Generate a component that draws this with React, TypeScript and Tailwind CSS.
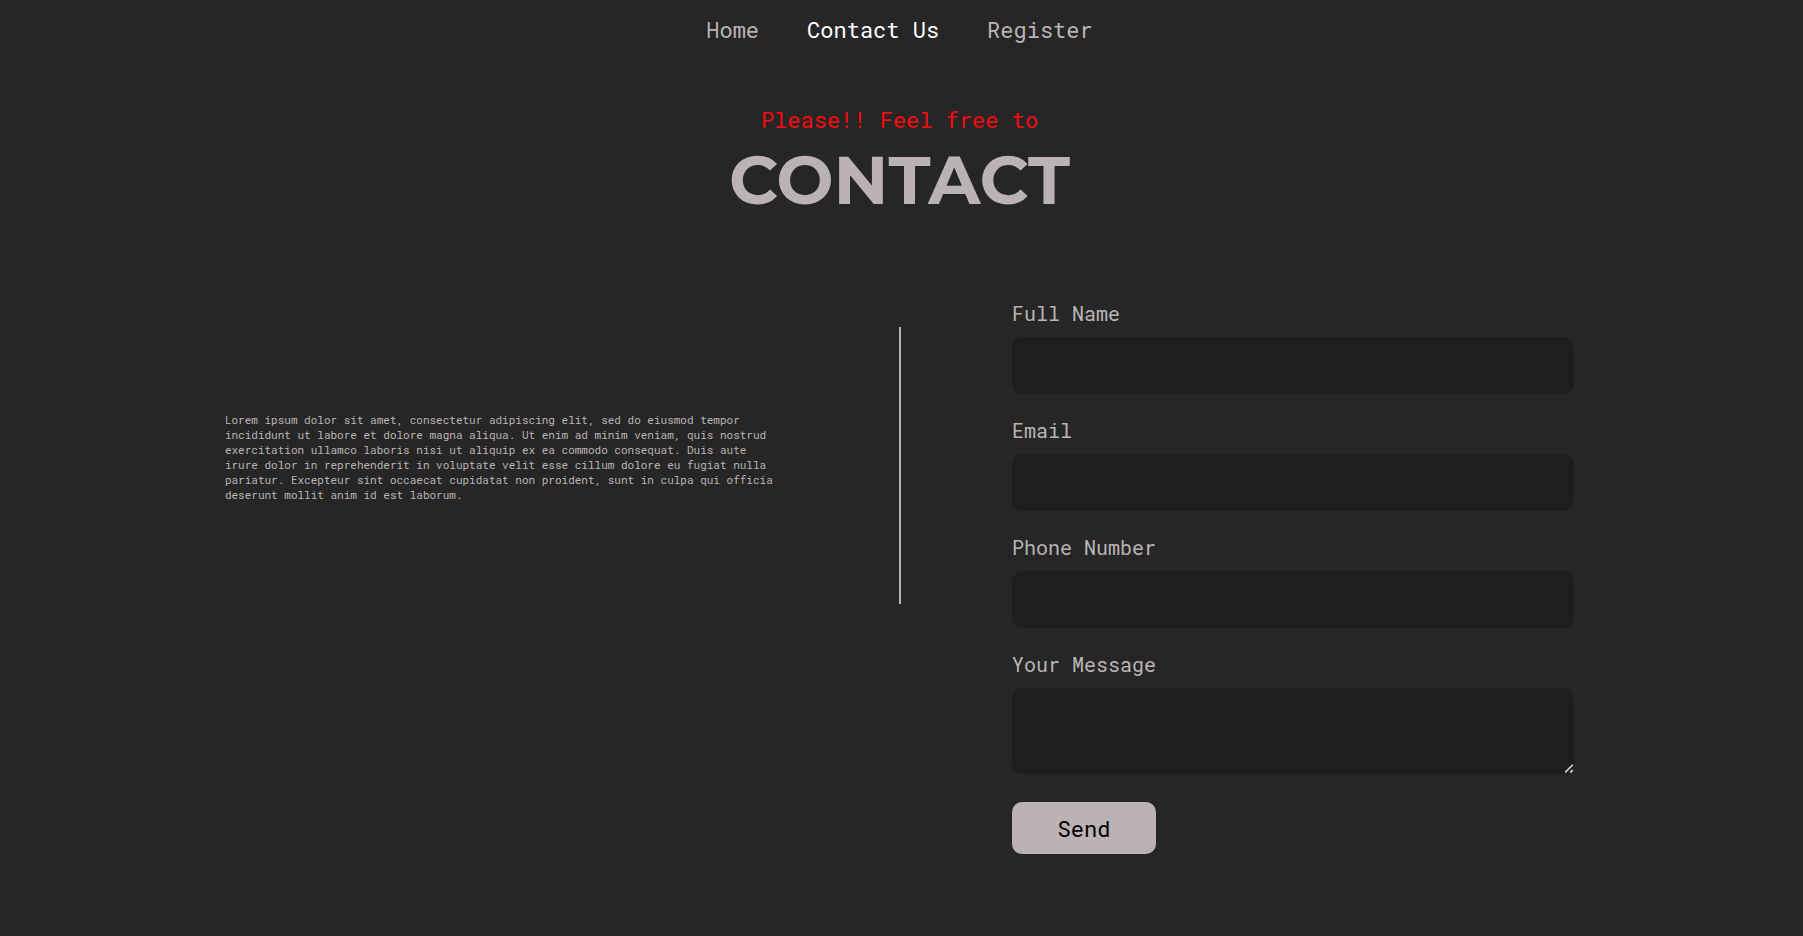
const links = [
  { label: 'Home', active: false },
  { label: 'Contact Us', active: true },
  { label: 'Register', active: false },
]

const fields = [
  { id: 'name', label: 'Full Name', type: 'text' },
  { id: 'email', label: 'Email', type: 'email' },
  { id: 'phone', label: 'Phone Number', type: 'tel' },
]

const labelClass = 'text-[20px] leading-[24px] text-[#bbb4b5]'
const boxClass = 'block w-full rounded-[10px] bg-[#1e1e1e] px-4 text-[20px] text-[#bbb4b5] outline-none'

export default function App() {
  return (
    <div className="min-h-screen bg-[#262626] pr-1 pb-16 font-['Roboto_Mono','Liberation_Mono',monospace] text-[#bbb4b5]">
      <nav className="flex justify-center gap-12 pt-[15px] text-[22px] leading-[30px]">
        {links.map((link) => (
          <a key={link.label} href="#" className={link.active ? 'text-white' : 'text-[#bbb4b5]'}>
            {link.label}
          </a>
        ))}
      </nav>

      <header className="pt-[60px] text-center">
        <p className="text-[22px] leading-[30px] text-[#f40b10]">Please!! Feel free to</p>
        <h1 className="font-['Montserrat','Lato',sans-serif] text-[68px] font-bold leading-[90px] text-[#bbb2b4]">
          CONTACT
        </h1>
      </header>

      <main className="mx-auto grid w-3/4 max-w-[1350px] grid-cols-[5fr_2fr_5fr] pt-[76px]">
        <p className="pr-2 pt-[111px] text-[11px] leading-[15px]">
          Lorem ipsum dolor sit amet, consectetur adipiscing elit, sed do eiusmod tempor incididunt ut labore et dolore
          magna aliqua. Ut enim ad minim veniam, quis nostrud exercitation ullamco laboris nisi ut aliquip ex ea commodo
          consequat. Duis aute irure dolor in reprehenderit in voluptate velit esse cillum dolore eu fugiat nulla
          pariatur. Excepteur sint occaecat cupidatat non proident, sunt in culpa qui officia deserunt mollit anim id
          est laborum.
        </p>
        <div className="mt-[26px] h-[277px] w-[2px] justify-self-center bg-[#bbb2b4]" />
        <form className="flex flex-col gap-6">
          {fields.map((field) => (
            <div key={field.id} className="flex flex-col gap-3">
              <label htmlFor={field.id} className={labelClass}>
                {field.label}
              </label>
              <input id={field.id} type={field.type} className={`${boxClass} h-[57px]`} />
            </div>
          ))}
          <div className="flex flex-col gap-3">
            <label htmlFor="message" className={labelClass}>
              Your Message
            </label>
            <div className="relative">
              <textarea id="message" className={`${boxClass} h-[86px] resize-none`} />
              <svg
                aria-hidden="true"
                viewBox="0 0 12 12"
                className="pointer-events-none absolute right-0 bottom-0 h-3 w-3"
                fill="none"
              >
                <path d="M1.5 10.5 10.5 1.5" stroke="#0c0c0c" strokeWidth="2" />
                <path d="M3 10.5 10.8 2.7M8.3 10.5 10.8 8" stroke="#c4c4c4" strokeWidth="1.8" />
              </svg>
            </div>
          </div>
          <button type="submit" className="mt-1 h-[52px] w-[144px] rounded-[10px] bg-[#bbb2b4] text-[22px] text-black">
            Send
          </button>
        </form>
      </main>
    </div>
  )
}
